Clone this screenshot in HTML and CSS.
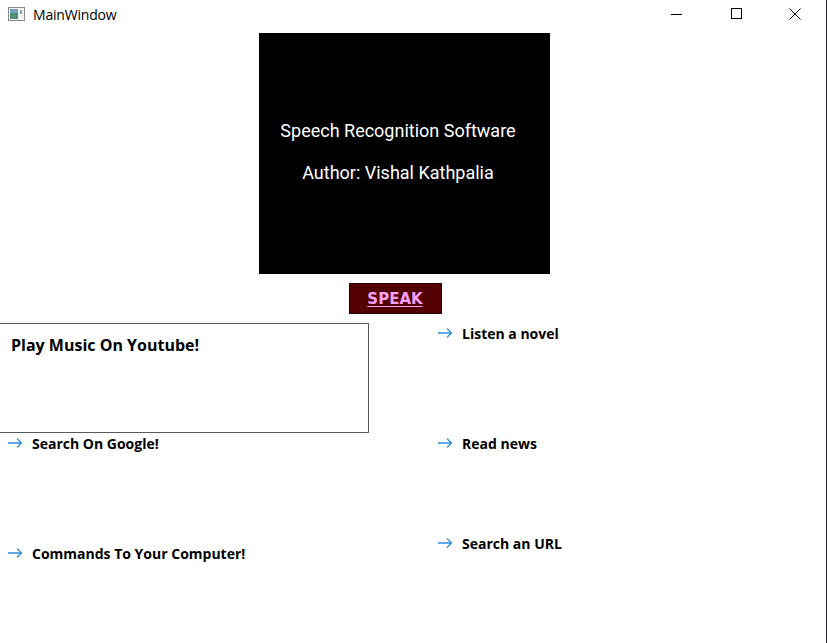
FILE: index.html
```html
<!DOCTYPE html>
<html>
<head>
<meta charset="utf-8">
<link rel="stylesheet" href="styles.css">
</head>
<body>
<div class="window">
  <div class="titlebar">
    <svg class="app-icon" width="17" height="14" viewBox="0 0 17 14">
      <rect x="0.5" y="0.5" width="16" height="13" fill="#f4f4f4" stroke="#8a8a8a"/>
      <rect x="2" y="2" width="8" height="10" fill="#4f8f7a"/>
      <rect x="2" y="2" width="8" height="4" fill="#6fa3b8"/>
      <rect x="12" y="3" width="2" height="4" fill="#8aa0a8"/>
    </svg>
    <span class="title">MainWindow</span>
    <div class="controls">
      <svg class="ctl" width="46" height="30" viewBox="0 0 46 30"><path d="M17 14.5h11" stroke="#000" stroke-width="1"/></svg>
      <svg class="ctl" width="46" height="30" viewBox="0 0 46 30"><rect x="18.5" y="8.5" width="10" height="10" fill="none" stroke="#000"/></svg>
      <svg class="ctl" width="46" height="30" viewBox="0 0 46 30"><path d="M17.5 8.5l11 11M28.5 8.5l-11 11" stroke="#000" stroke-width="1"/></svg>
    </div>
  </div>
  <div class="content">
    <div class="hero">
      <p class="hero-line">Speech Recognition Software</p>
      <p class="hero-line">Author: Vishal Kathpalia</p>
    </div>
    <button class="speak">SPEAK</button>
    <div class="grid">
      <div class="cell">
        <div class="box">Play Music On Youtube!</div>
      </div>
      <div class="cell right">
        <div class="item"><svg class="arrow" width="16" height="12" viewBox="0 0 16 12"><path d="M1 6h14M10 1.5l4.5 4.5-4.5 4.5" fill="none" stroke="#2f8fe3" stroke-width="1.3"/></svg><span>Listen a novel</span></div>
      </div>
      <div class="cell">
        <div class="item"><svg class="arrow" width="16" height="12" viewBox="0 0 16 12"><path d="M1 6h14M10 1.5l4.5 4.5-4.5 4.5" fill="none" stroke="#2f8fe3" stroke-width="1.3"/></svg><span>Search On Google!</span></div>
      </div>
      <div class="cell right">
        <div class="item"><svg class="arrow" width="16" height="12" viewBox="0 0 16 12"><path d="M1 6h14M10 1.5l4.5 4.5-4.5 4.5" fill="none" stroke="#2f8fe3" stroke-width="1.3"/></svg><span>Read news</span></div>
      </div>
      <div class="cell">
        <div class="item"><svg class="arrow" width="16" height="12" viewBox="0 0 16 12"><path d="M1 6h14M10 1.5l4.5 4.5-4.5 4.5" fill="none" stroke="#2f8fe3" stroke-width="1.3"/></svg><span>Commands To Your Computer!</span></div>
      </div>
      <div class="cell right">
        <div class="item raised"><svg class="arrow" width="16" height="12" viewBox="0 0 16 12"><path d="M1 6h14M10 1.5l4.5 4.5-4.5 4.5" fill="none" stroke="#2f8fe3" stroke-width="1.3"/></svg><span>Search an URL</span></div>
      </div>
    </div>
  </div>
</div>
</body>
</html>
```
FILE: styles.css
```css
html, body {
  margin: 0;
  padding: 0;
  background: #fff;
}
.window {
  width: 826px;
  height: 643px;
  border-right: 1px solid #1c2530;
  overflow: hidden;
  font-family: "Open Sans", "Liberation Sans", sans-serif;
  color: #000;
}
.titlebar {
  height: 31px;
  display: flex;
  align-items: flex-start;
}
.app-icon {
  margin: 7px 0 0 8px;
}
.title {
  margin: 5px 0 0 8px;
  font-family: "Open Sans", sans-serif;
  font-size: 14px;
  letter-spacing: -0.2px;
}
.controls {
  margin-left: auto;
  display: flex;
  margin-right: 8px;
}
.ctl {
  display: block;
  margin-left: 13px;
}
.content {
  display: flex;
  flex-direction: column;
  align-items: center;
}
.hero {
  margin-top: 2px;
  margin-right: 18px;
  width: 291px;
  height: 241px;
  box-sizing: border-box;
  padding-right: 12px;
  padding-bottom: 3px;
  background: #000;
  color: #fff;
  display: flex;
  flex-direction: column;
  justify-content: center;
  align-items: center;
  gap: 18px;
  font-family: Roboto, sans-serif;
  font-size: 18px;
}
.hero-line {
  margin: 0;
  line-height: 24px;
}
.speak {
  margin: 9px 36px 0 0;
  width: 93px;
  height: 31px;
  background: #520000;
  border: 1px solid #2a0000;
  color: #f7a0f7;
  font-family: "DejaVu Sans", Verdana, sans-serif;
  font-weight: bold;
  font-size: 15px;
  text-decoration: underline;
  text-underline-offset: 2px;
  padding: 0;
}
.grid {
  align-self: stretch;
  margin-top: 9px;
  display: grid;
  grid-template-columns: 430px 1fr;
  grid-template-rows: 110px 110px 100px;
}
.box {
  margin-left: -1px;
  border: 1px solid #5a5a5a;
  font-family: "Open Sans", sans-serif;
  font-weight: bold;
  font-size: 16px;
  padding-left: 11px;
  padding-top: 10px;
  box-sizing: border-box;
  height: 110px;
  width: 370px;
}
.item {
  display: flex;
  align-items: center;
  margin-top: 1px;
  height: 18px;
  font-family: "Open Sans", sans-serif;
  font-weight: bold;
  font-size: 14px;
}
.cell .item .arrow {
  margin-left: 7px;
  margin-right: 9px;
}
.item.raised {
  margin-top: -9px;
}
```
